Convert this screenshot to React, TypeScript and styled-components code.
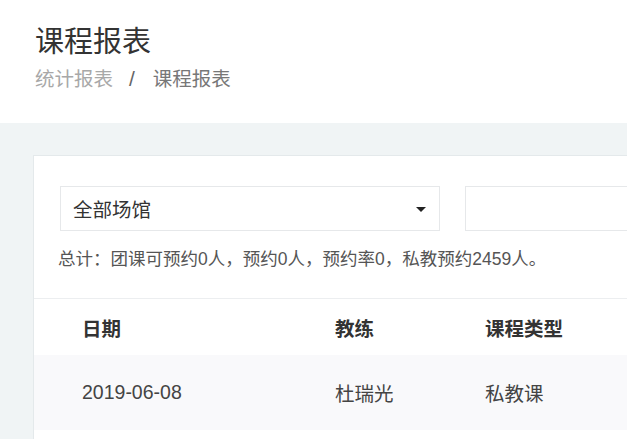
import React from "react";
import styled, { createGlobalStyle } from "styled-components";

const GlobalStyle = createGlobalStyle`
  html, body {
    margin: 0;
    padding: 0;
    background: #f0f4f5;
  }
  body {
    font-family: "Liberation Sans", "Noto Sans CJK SC", sans-serif;
    color: #333;
  }
`;

const Page = styled.div`
  height: 100vh;
  overflow: hidden;
  background: #f0f4f5;
`;

const PageHeader = styled.header`
  background: #fff;
  height: 123px;
  box-sizing: border-box;
  padding: 22px 35px 0;
`;

const Title = styled.h1`
  margin: 0;
  font-size: 29px;
  font-weight: 400;
  line-height: 40px;
  color: #333;
`;

const Breadcrumb = styled.nav`
  display: flex;
  align-items: center;
  margin-top: 3px;
  height: 28px;
  font-size: 19.5px;
  line-height: 28px;
`;

const Crumb = styled.span<{ $current?: boolean }>`
  color: ${(p) => (p.$current ? "#777" : "#a8a8a8")};
`;

const Separator = styled.span`
  color: #666;
  font-size: 21px;
  margin: 0 18px 0 16px;
`;

const Content = styled.main`
  padding: 32px 0 0 33px;
`;

const Card = styled.section`
  background: #fff;
  border: 1px solid #e4e9eb;
  border-right: none;
  overflow: hidden;
`;

const Filters = styled.div`
  padding: 30px 0 25px 26px;
  border-bottom: 1px solid #eceef0;
`;

const FilterRow = styled.div`
  display: flex;
  gap: 25px;
  overflow: hidden;
`;

const SelectBox = styled.div`
  flex: 0 0 380px;
  height: 45px;
  box-sizing: border-box;
  border: 1px solid #e6e8ea;
  display: flex;
  align-items: center;
  justify-content: space-between;
  padding: 0 13px 0 12px;
  font-size: 19.5px;
  color: #333;
`;

const Caret = styled.span`
  width: 0;
  height: 0;
  border-left: 5px solid transparent;
  border-right: 5px solid transparent;
  border-top: 5px solid #222;
  margin-top: 2px;
`;

const TextInput = styled.div`
  flex: 0 0 380px;
  height: 45px;
  box-sizing: border-box;
  border: 1px solid #e6e8ea;
`;

const Summary = styled.p`
  margin: 14px 0 0 -2px;
  font-size: 17.5px;
  line-height: 28px;
  color: #555;
  white-space: nowrap;
`;

const Row = styled.div<{ $head?: boolean }>`
  display: grid;
  grid-template-columns: 253px 150px 1fr;
  align-items: center;
  padding-left: 48px;
  height: ${(p) => (p.$head ? "56px" : "75px")};
  background: ${(p) => (p.$head ? "#fff" : "#f9f9fb")};
  font-size: 19.5px;
  font-weight: ${(p) => (p.$head ? 700 : 400)};
  color: ${(p) => (p.$head ? "#333" : "#444")};
  white-space: nowrap;
`;

const Cell = styled.div``;

const columns = ["日期", "教练", "课程类型"];

const rows = [["2019-06-08", "杜瑞光", "私教课"]];

export default function App() {
  return (
    <Page>
      <GlobalStyle />
      <PageHeader>
        <Title>课程报表</Title>
        <Breadcrumb>
          <Crumb>统计报表</Crumb>
          <Separator>/</Separator>
          <Crumb $current>课程报表</Crumb>
        </Breadcrumb>
      </PageHeader>
      <Content>
        <Card>
          <Filters>
            <FilterRow>
              <SelectBox>
                全部场馆
                <Caret />
              </SelectBox>
              <TextInput />
            </FilterRow>
            <Summary>
              总计：团课可预约0人，预约0人，预约率0，私教预约2459人。
            </Summary>
          </Filters>
          <Row $head>
            {columns.map((c, i) => (
              <Cell key={i}>{c}</Cell>
            ))}
          </Row>
          {rows.map((r, i) => (
            <Row key={i}>
              {r.map((c, j) => (
                <Cell key={j}>{c}</Cell>
              ))}
            </Row>
          ))}
          <Row $head />
        </Card>
      </Content>
    </Page>
  );
}
